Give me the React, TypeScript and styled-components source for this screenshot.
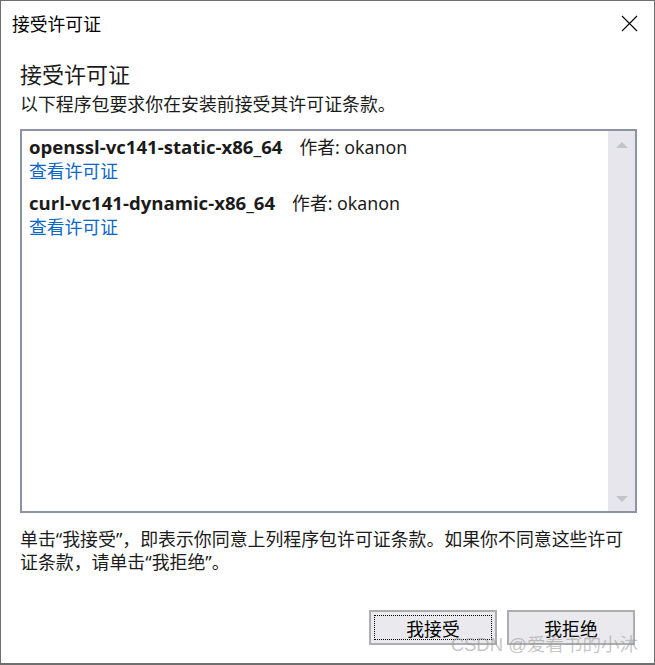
import * as React from 'react'
import styled, { createGlobalStyle } from 'styled-components'

const GlobalStyle = createGlobalStyle`
  html, body {
    margin: 0;
    padding: 0;
    background: #ffffff;
  }
  body {
    font-family: "Noto Sans", "Noto Sans CJK SC", sans-serif;
    color: #1a1a1a;
  }
`

const cjk = `"Noto Sans", "Noto Sans CJK SC", sans-serif`

const Window = styled.div`
  position: relative;
  box-sizing: border-box;
  width: 655px;
  height: 665px;
  border: 1px solid #6e6e6e;
  border-bottom-width: 2px;
  background: #ffffff;
  display: flex;
  flex-direction: column;
`

const TitleBar = styled.div`
  height: 43px;
  display: flex;
  align-items: center;
  justify-content: space-between;
  padding: 0 16px 0 11px;
  font-family: ${cjk};
  font-size: 17.8px;
  color: #000;
`

const CloseButton = styled.div`
  width: 17px;
  height: 17px;
  display: flex;
  margin-top: 1px;
`

const Body = styled.div`
  flex: 1;
  display: flex;
  flex-direction: column;
  padding: 15px 17px 18px 19px;
`

const Heading = styled.div`
  font-family: ${cjk};
  font-size: 22px;
  line-height: 30px;
  color: #1b1b1b;
`

const Subtitle = styled.div`
  font-family: ${cjk};
  font-size: 17.9px;
  line-height: 26px;
  margin-top: 2px;
  color: #1b1b1b;
`

const ListBox = styled.div`
  margin-top: 12px;
  height: 384px;
  box-sizing: border-box;
  border: 2px solid #8c94a4;
  display: flex;
`

const Items = styled.div`
  flex: 1;
  padding: 4px 7px;
  display: flex;
  flex-direction: column;
  gap: 8px;
`

const Item = styled.div`
  display: flex;
  flex-direction: column;
  font-size: 17.8px;
  line-height: 24px;
`

const NameLine = styled.div`
  display: flex;
  align-items: baseline;
  gap: 17px;
  color: #1b1b1b;
`

const PackageName = styled.span`
  font-family: "Open Sans", "Noto Sans", sans-serif;
  font-size: 18.6px;
  font-weight: 700;
`

const Author = styled.span`
  font-family: ${cjk};
`

const LicenseLink = styled.a`
  font-family: ${cjk};
  color: #0a66c8;
  text-decoration: none;
  cursor: pointer;
`

const ScrollBar = styled.div`
  width: 27px;
  background: #e6e6ec;
  display: flex;
  flex-direction: column;
  justify-content: space-between;
  align-items: center;
  padding: 11px 0 9px;
`

const Arrow = styled.div<{ $down?: boolean }>`
  width: 0;
  height: 0;
  border-left: 6px solid transparent;
  border-right: 6px solid transparent;
  ${p =>
    p.$down
      ? 'border-top: 6px solid #c3c4cb;'
      : 'border-bottom: 6px solid #c3c4cb;'}
`

const Notice = styled.div`
  margin-top: 15px;
  font-family: ${cjk};
  font-size: 17.9px;
  line-height: 23px;
  color: #1b1b1b;
`

const ButtonRow = styled.div`
  margin-top: auto;
  display: flex;
  justify-content: flex-end;
  gap: 10px;
  padding-right: 2px;
`

const Button = styled.button<{ $focused?: boolean }>`
  position: relative;
  width: 128px;
  height: 35px;
  box-sizing: border-box;
  border: 2px solid #adadad;
  background: #e9e9ee;
  font-family: ${cjk};
  font-size: 17.8px;
  color: #000;
  padding: 0;
  &::after {
    content: '';
    display: ${p => (p.$focused ? 'block' : 'none')};
    position: absolute;
    inset: 3px;
    border: 1px dotted #000;
  }
`

const Watermark = styled.div`
  position: absolute;
  right: 16px;
  bottom: 7px;
  font-family: "Liberation Sans", "Noto Sans CJK SC", sans-serif;
  font-size: 18.5px;
  color: rgba(150, 150, 150, 0.55);
  pointer-events: none;
`

const packages = [
  { name: 'openssl-vc141-static-x86_64', author: 'okanon' },
  { name: 'curl-vc141-dynamic-x86_64', author: 'okanon' },
]

export default function App() {
  return (
    <>
      <GlobalStyle />
      <Window>
        <TitleBar>
          <span>接受许可证</span>
          <CloseButton>
            <svg width="17" height="17" viewBox="0 0 17 17">
              <path d="M1 1 L16 16 M16 1 L1 16" stroke="#000" strokeWidth="1.1" fill="none" />
            </svg>
          </CloseButton>
        </TitleBar>
        <Body>
          <Heading>接受许可证</Heading>
          <Subtitle>以下程序包要求你在安装前接受其许可证条款。</Subtitle>
          <ListBox>
            <Items>
              {packages.map(p => (
                <Item key={p.name}>
                  <NameLine>
                    <PackageName>{p.name}</PackageName>
                    <Author>作者: {p.author}</Author>
                  </NameLine>
                  <LicenseLink>查看许可证</LicenseLink>
                </Item>
              ))}
            </Items>
            <ScrollBar>
              <Arrow />
              <Arrow $down />
            </ScrollBar>
          </ListBox>
          <Notice>
            单击“我接受”，即表示你同意上列程序包许可证条款。如果你不同意这些许可证条款，请单击“我拒绝”。
          </Notice>
          <ButtonRow>
            <Button $focused>我接受</Button>
            <Button>我拒绝</Button>
          </ButtonRow>
        </Body>
        <Watermark>CSDN @爱看书的小沐</Watermark>
      </Window>
    </>
  )
}
